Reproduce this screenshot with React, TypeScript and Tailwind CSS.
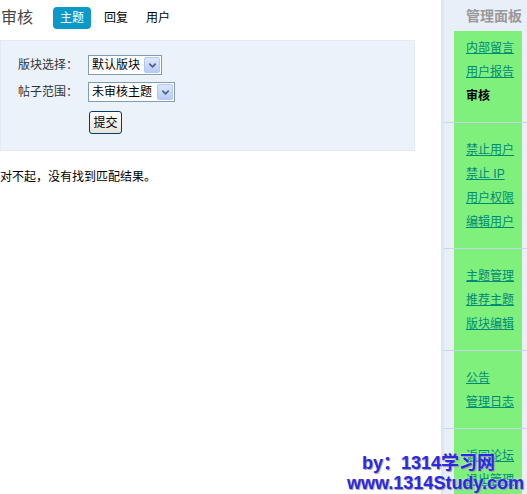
import { ChevronDown } from 'lucide-react';

const font = { fontFamily: '"Liberation Sans", "Noto Sans CJK SC", sans-serif' };

function FakeSelect({ label, width }: { label: string; width: string }) {
  return (
    <div className={`flex items-center h-[20px] ${width} border border-[#7f9db9] bg-white`}>
      <span className="flex-1 pl-[3px] text-[12px] leading-[18px] text-black whitespace-nowrap">{label}</span>
      <span className="flex items-center justify-center w-[16px] h-[16px] mr-[1px] rounded-[2px] border border-[#b6c8f0] bg-gradient-to-b from-[#dde8fd] to-[#b7cbf6]">
        <ChevronDown size={11} strokeWidth={3.5} className="text-[#4d6185]" />
      </span>
    </div>
  );
}

const sections: { items: { text: string; active?: boolean }[]; pt: string }[] = [
  { pt: 'pt-[5px]', items: [{ text: '内部留言' }, { text: '用户报告' }, { text: '审核', active: true }] },
  { pt: 'pt-[15px]', items: [{ text: '禁止用户' }, { text: '禁止 IP' }, { text: '用户权限' }, { text: '编辑用户' }] },
  { pt: 'pt-[15px]', items: [{ text: '主题管理' }, { text: '推荐主题' }, { text: '版块编辑' }] },
  { pt: 'pt-[15px]', items: [{ text: '公告' }, { text: '管理日志' }] },
  { pt: 'pt-[15px]', items: [{ text: '返回论坛' }, { text: '退出管理' }] },
];

export default function App() {
  return (
    <div className="relative flex w-[527px] h-[494px] overflow-hidden bg-white text-[12px]" style={font}>
      {/* main column */}
      <div className="w-[441px] shrink-0">
        <div className="flex items-center h-[36px] mb-[4px]">
          <span className="ml-[1px] text-[16px] text-[#444]">审核</span>
          <span className="ml-[20px] px-[7px] h-[22px] leading-[22px] rounded-[4px] bg-[#0c98c8] text-white">主题</span>
          <span className="ml-[6px] px-[7px] text-black">回复</span>
          <span className="ml-[4px] px-[7px] text-black">用户</span>
        </div>

        <div className="w-[415px] h-[111px] bg-[#ebf2fa] border border-[#e2eaf3] pt-[14px] pl-[17px]">
          <div className="flex items-center">
            <span className="w-[70px] text-[#333]">版块选择：</span>
            <FakeSelect label="默认版块" width="w-[74px]" />
          </div>
          <div className="flex items-center mt-[7px]">
            <span className="w-[70px] text-[#333]">帖子范围：</span>
            <FakeSelect label="未审核主题" width="w-[87px]" />
          </div>
          <div className="ml-[71px] mt-[9px]">
            <button className="w-[33px] h-[23px] rounded-[3px] border border-[#003c74] bg-gradient-to-b from-white to-[#e6e3d6] text-[12px] text-black leading-none">
              提交
            </button>
          </div>
        </div>

        <p className="mt-[17px] leading-[18px] text-black">对不起，没有找到匹配结果。</p>
      </div>

      {/* side panel */}
      <div className="w-[86px] shrink-0 bg-[#e8eff8] border-l-[3px] border-[#dde6f2]">
        <div className="h-[31px] pl-[22px] pt-[7px] text-[14px] font-bold text-[#999] whitespace-nowrap leading-[18px]">管理面板</div>
        {sections.map((s, i) => (
          <div key={i} className={i < sections.length - 1 ? 'border-b border-[#c7d6ef]' : ''}>
            <div className={`ml-[10px] w-[68px] bg-[#80f07c] pl-[12px] ${s.pt} pb-[14px]`}>
              {s.items.map((it) =>
                it.active ? (
                  <div key={it.text} className="h-[24px] leading-[24px] font-bold text-black">{it.text}</div>
                ) : (
                  <div key={it.text} className="h-[24px] leading-[24px]">
                    <a className="text-[#008a78] underline whitespace-nowrap">{it.text}</a>
                  </div>
                )
              )}
            </div>
          </div>
        ))}
      </div>

      {/* watermark */}
      <div className="absolute left-[347px] top-[453px] font-bold text-[18px] leading-[20px] text-[#2a2ae6] [text-shadow:1px_1px_1px_#9a9a9a,0_0_2px_#ffffff] whitespace-nowrap" style={{ fontFamily: '"Liberation Sans", "Noto Sans CJK SC", sans-serif' }}>
        <div className="pl-[15px]">by：1314学习网</div>
        <div>www.1314Study.com</div>
      </div>
    </div>
  );
}
